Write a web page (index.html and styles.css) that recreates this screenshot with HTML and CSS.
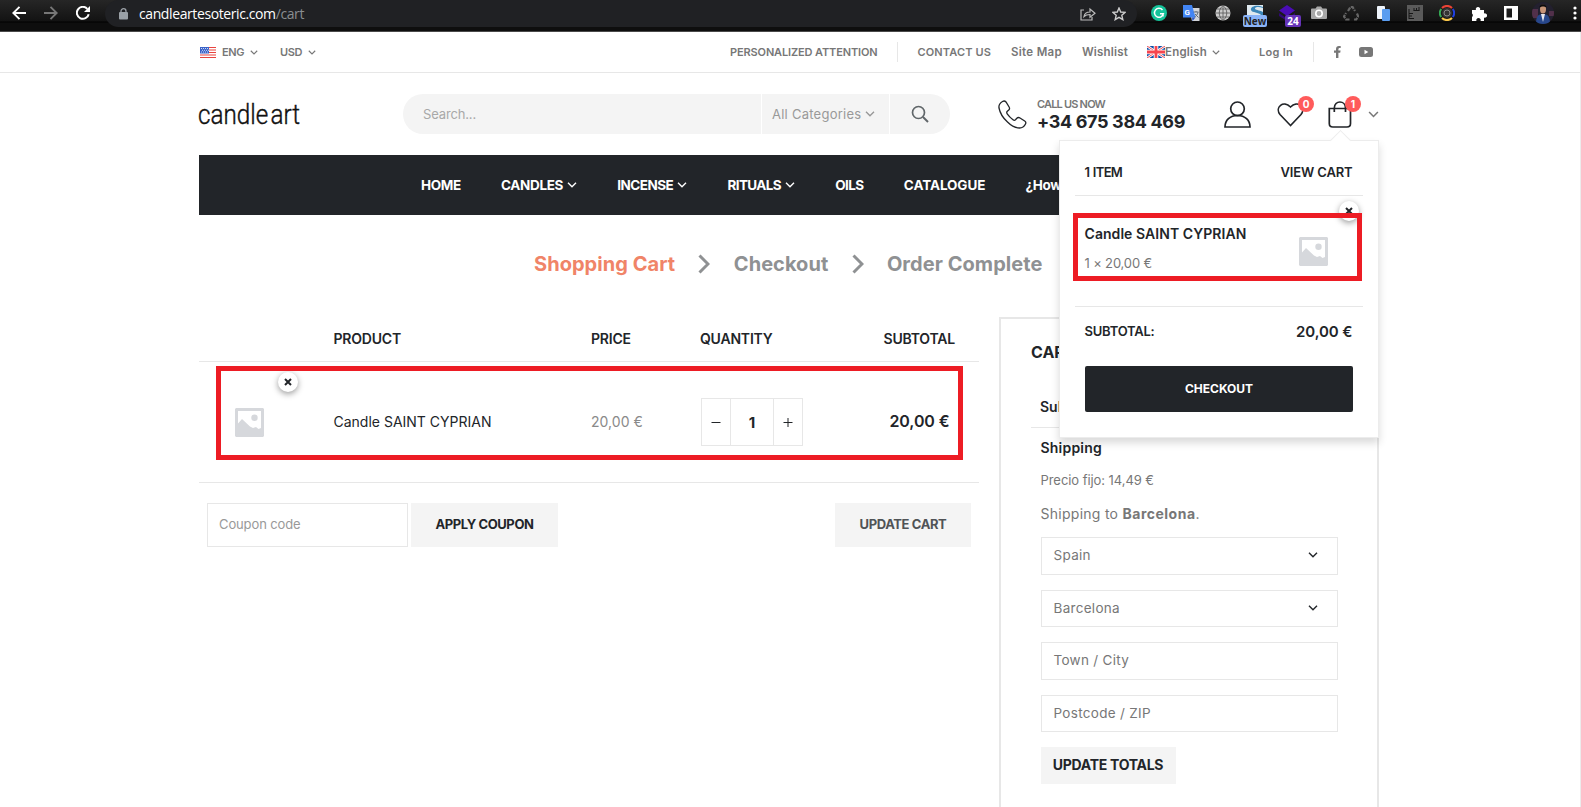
FILE: index.html
```html
<!DOCTYPE html>
<html lang="en">
<head>
    <meta charset="UTF-8">
    <meta name="viewport" content="width=device-width, initial-scale=1.0">
    <title>Cart - Candle Art</title>
    <link rel="stylesheet" href="styles.css">
</head>
<body>
    <!-- Shared icons -->
    <svg class="defs" width="0" height="0">
        <symbol id="chevron" viewBox="0 0 10 6"><path d="M1 .8l4 4 4-4" fill="none" stroke="currentColor" stroke-width="1.4"/></symbol>
        <symbol id="placeholder" viewBox="0 0 29 29">
            <path fill="#d6d8dc" fill-rule="evenodd" d="M1 0h27l1 1v27l-1 1H1l-1-1V1zM3 3v12.500l4-4.500 8 7.500 3 1.500 3-1 2.500 2 2.500-1V3z"/>
            <circle cx="19.500" cy="9.800" r="3.200" fill="#d6d8dc"/>
        </symbol>
        <symbol id="cross" viewBox="0 0 8 8"><path d="M1 1l6 6M7 1L1 7" stroke="#222529" stroke-width="2"/></symbol>
    </svg>

    <!-- Browser toolbar -->
    <div class="browser">
        <div class="browser-nav">
            <svg width="14" height="14" viewBox="0 0 14 14"><path d="M14 7H1.500M7.500 .8L1.300 7l6.200 6.200" fill="none" stroke="#fff" stroke-width="1.900"/></svg>
            <svg width="14" height="14" viewBox="0 0 14 14"><path d="M0 7h12.500M6.500 .8L12.700 7l-6.200 6.200" fill="none" stroke="#777" stroke-width="1.900"/></svg>
            <svg width="14" height="14" viewBox="0 0 14 14"><path d="M12.700 8.200A6 6 0 1 1 11.300 2.800" fill="none" stroke="#fff" stroke-width="2"/><path d="M14 0v6H8z" fill="#fff"/></svg>
        </div>
        <div class="address">
            <svg width="9" height="12" viewBox="0 0 9 12"><path d="M2 5V3.200a2.500 2.500 0 0 1 5 0V5" fill="none" stroke="#9aa0a6" stroke-width="1.300"/><rect y="4" width="9" height="7.500" rx="1" fill="#9aa0a6"/></svg>
            <span class="url">candleartesoteric.com<i>/cart</i></span>
            <svg class="share" width="16" height="14" viewBox="0 0 16 14"><path d="M4 3H1v10h11v-3M4 9.500c.5-3 2.500-4.500 6-4.500V2l5 4.300-5 4V7.500c-3 0-4.500.5-6 2z" fill="none" stroke="#bbb" stroke-width="1.200"/></svg>
            <svg width="14" height="14" viewBox="0 0 14 14"><path d="M7 1l1.700 4 4.300.4-3.200 2.900 1 4.300L7 10.300l-3.800 2.300 1-4.300L1 5.400 5.300 5z" fill="none" stroke="#ccc" stroke-width="1.400"/></svg>
        </div>
        <div class="extensions">
            <span><svg width="16" height="16" viewBox="0 0 16 16"><circle cx="8" cy="8" r="8" fill="#15c39a"/><path d="M11.500 5A4.500 4.500 0 1 0 12.400 8.700H9M12 8v3.500" fill="none" stroke="#fff" stroke-width="1.500"/></svg></span>
            <span><svg width="17" height="16" viewBox="0 0 17 16"><path d="M6 3h10.500v13H9z" fill="#d2d4d8"/><path d="M0 0h9l3.500 12.500H0z" fill="#4285f4"/><path d="M9 12.500h3.500L9.500 16z" fill="#2a56c6"/><text x="1.500" y="9.500" class="tiny-g">G</text><path d="M10.500 7h5M13 6v1M15 7c-.5 3-2 4-3.500 5M12 9l3.500 3.500" fill="none" stroke="#5f6b78"/></svg></span>
            <span><svg width="16" height="16" viewBox="0 0 16 16"><circle cx="8" cy="8" r="7.500" fill="#ccc"/><path d="M8 .5v15M.5 8h15M2 4h12M2 12h12M8 .5c-5 4-5 11 0 15M8 .5c5 4 5 11 0 15" fill="none" stroke="#555" stroke-width=".8"/></svg></span>
            <span><svg width="16" height="16" viewBox="0 0 16 16"><path d="M0 0h16v16H0z" fill="#dfe9ef"/><path d="M16 2C9-1 3 2 4 5s8 2 10 5l2 1V7C12 5 8 5 8 3.500S12 1.500 16 3z" fill="#3b86b8"/></svg><b class="ext-badge new">New</b></span>
            <span><svg width="16" height="16" viewBox="0 0 16 16"><path d="M8 0l8 5.500-8 5.500-8-5.500z" fill="#4a0cb5"/><path d="M0 8l8 5.500L16 8v3l-8 5-8-5z" fill="#2f0873"/></svg><b class="ext-badge count">24</b></span>
            <span><svg width="16" height="14" viewBox="0 0 16 14"><path d="M1 2.500h3.500L6 .5h4l1.500 2H15q1 0 1 1V12q0 1-1 1H1q-1 0-1-1V3.500q0-1 1-1z" fill="#a8a8a8"/><circle cx="8" cy="7.500" r="3.200" fill="none" stroke="#fff" stroke-width="1.600"/></svg></span>
            <span><svg width="16" height="15" viewBox="0 0 16 15"><path d="M5 5l2.500-4h2L12 5M14 7.500l1.200 3-2 3H10M6.500 13.500H3l-2-3 2-3.500" fill="none" stroke="#666" stroke-width="2.200" stroke-dasharray="4 1"/></svg></span>
            <span><svg width="13" height="15" viewBox="0 0 13 15"><rect width="8" height="13" rx="1" fill="#eef4fb"/><rect x="5" y="3" width="8" height="12" rx="1" fill="#5a9df0"/></svg></span>
            <span><svg width="16" height="16" viewBox="0 0 16 16"><path d="M0 0h16v16H0z" fill="#5a5a5a"/><path d="M2 14V4M2 13.500h5M2 11h3M2 8.500h4M7 5.500V3M9.500 5.500V3M12 5.500V2M6.500 5.500h6" fill="none" stroke="#161616"/></svg></span>
            <span><svg width="16" height="16" viewBox="0 0 16 16"><g fill="none" stroke-width="2"><path d="M3 3a7 7 0 0 1 10 0" stroke="#ea4335"/><path d="M13.800 4a7 7 0 0 1 0 8" stroke="#2040e0"/><path d="M13 13a7 7 0 0 1-10 0" stroke="#fbc84a"/><path d="M2.200 12a7 7 0 0 1 0-8" stroke="#34a853"/></g><circle cx="8" cy="8" r="5" fill="#333"/><circle cx="8" cy="8" r="3" fill="none" stroke="#888"/></svg></span>
            <span><svg width="15" height="15" viewBox="0 0 15 15"><path d="M0 4h4a2.200 2.200 0 1 1 4 0h4v3.500a2.200 2.200 0 1 1 0 4V15H8.500a2.200 2.200 0 1 0-4 0H0v-4a2.200 2.200 0 0 0 0-3.500z" fill="#fff"/></svg></span>
            <span><svg width="14" height="14" viewBox="0 0 14 14"><path d="M0 0h14v14H0zM2.500 2.500v9H8v-9z" fill="#fff" fill-rule="evenodd"/></svg></span>
            <span><svg width="22" height="22" viewBox="0 0 22 22"><clipPath id="face"><circle cx="11" cy="11" r="11"/></clipPath><g clip-path="url(#face)"><path d="M0 0h22v22H0z" fill="#23202f"/><path d="M0 7h6v9H0zM17 9h5v5h-5z" fill="#51304a"/><path d="M4 22c0-6 1-10 7-10s7 4 7 10z" fill="#27478c"/><path d="M9 12h4l-2 8z" fill="#e8e8f0"/><ellipse cx="11" cy="7" rx="3" ry="4.500" fill="#c79478"/><path d="M7.500 6c-.5-5 7.500-5 7 0-1-2-6-2-7 0z" fill="#0c0a0c"/></g></svg></span>
            <span><svg width="4" height="14" viewBox="0 0 4 14"><g fill="#fff"><circle cx="2" cy="2" r="1.600"/><circle cx="2" cy="7" r="1.600"/><circle cx="2" cy="12" r="1.600"/></g></svg></span>
        </div>
    </div>

    <div class="page">
        <div class="top-bar">
            <div class="container">
                <svg class="flag-us" width="16" height="11" viewBox="0 0 16 11"><path d="M0 0h16v11H0z" fill="#fff"/><path d="M0 .5h16M0 3h16M0 5.500h16M0 8h16M0 10.500h16" stroke="#e8443f" stroke-width="1.200"/><path d="M0 0h9v6.500H0z" fill="#3a63c8"/><path d="M1 1.500h7.500M2 3.300h7M1 5h7.500" stroke="#dfe7fa" stroke-width=".9" stroke-dasharray="1 1"/></svg>
                <span class="caps">ENG</span>
                <svg class="chev" width="8" height="5"><use href="#chevron"/></svg>
                <span class="caps usd">USD</span>
                <svg class="chev" width="8" height="5"><use href="#chevron"/></svg>
                <div class="top-links">
                    <a class="attention">PERSONALIZED ATTENTION</a>
                    <i class="sep"></i>
                    <a class="contact">CONTACT US</a>
                    <a class="sitemap">Site Map</a>
                    <a class="wishlist">Wishlist</a>
                    <svg width="18" height="12" viewBox="0 0 18 12"><path d="M0 0h18v12H0z" fill="#0d4ea8"/><path d="M0 0l18 12M18 0L0 12" stroke="#fff" stroke-width="2.600"/><path d="M0 0l18 12M18 0L0 12" stroke="#f04c55" stroke-width="1"/><path d="M9 0v12M0 6h18" stroke="#fff" stroke-width="4.600"/><path d="M9 0v12M0 6h18" stroke="#f5454f" stroke-width="2.800"/></svg>
                    <a class="english">English</a>
                    <svg class="chev" width="8" height="5"><use href="#chevron"/></svg>
                    <a class="login">Log In</a>
                    <i class="sep"></i>
                    <svg class="fb" width="7" height="12" viewBox="0 0 7 12"><path d="M2 12V6.800H0V4.600h2V3C2 1 3.100 0 4.900 0 5.800 0 6.700.1 6.700.1v2h-1C4.700 2.100 4.400 2.700 4.400 3.300v1.300h2.200l-.4 2.200H4.400V12z" fill="#777"/></svg>
                    <svg width="14" height="10" viewBox="0 0 14 10"><rect width="14" height="10" rx="2.500" fill="#777"/><path d="M5.500 2.800v4.400L9.300 5z" fill="#fff"/></svg>
                </div>
            </div>
        </div>

        <div class="header">
            <svg class="logo" width="104" height="36" viewBox="0 0 104 36"><text x="0" y="28" textLength="102" lengthAdjust="spacingAndGlyphs">candle art</text></svg>
            <div class="search">
                <span class="search-input">Search...</span>
                <span class="search-cat">All Categories <svg width="10" height="6"><use href="#chevron"/></svg></span>
                <span class="search-btn"><svg width="18" height="18" viewBox="0 0 18 18"><circle cx="7.500" cy="7.500" r="6" fill="none" stroke="#606669" stroke-width="1.700"/><path d="M12 12l5 5" stroke="#606669" stroke-width="2"/></svg></span>
            </div>
            <svg class="phone" width="29" height="29" viewBox="0 0 29 29"><path d="M4.500 1.500C2 3 .5 5 1 8c1 5 4 10 8.500 14 4 4 8 6 12 6 3 0 5-2 6-4 .6-1.200.3-2.300-.8-3L22 18c-1.300-.8-2.300-.6-3.200.3l-1.300 1.500c-.8.8-1.600.7-2.500 0-2-1.600-4.200-3.800-5.800-6-.7-1-.6-1.800.1-2.500l1.500-1.300c.9-.8 1-1.800.3-3L8 2C7 .8 5.800.7 4.500 1.500z" fill="none" stroke="#222529" stroke-width="1.300"/></svg>
            <div class="call">
                <span>CALL US NOW</span>
                <b>+34 675 384 469</b>
            </div>
            <svg class="user" width="27" height="27" viewBox="0 0 27 27"><g fill="none" stroke="#222529" stroke-width="1.700"><circle cx="13.500" cy="7.800" r="6.800"/><path d="M1 26c0-7 5-11.500 12.500-11.500S26 19 26 26z"/></g></svg>
            <div class="icon-wrap heart">
                <svg width="27" height="25" viewBox="0 0 27 25"><path d="M13.500 23.500L3 12.500C-2.500 5 6.500-2 13.500 5 20.500-2 29.500 5 24 12.500z" fill="none" stroke="#222529" stroke-width="1.600"/></svg>
                <b class="badge">0</b>
            </div>
            <div class="icon-wrap bag">
                <svg width="24" height="27" viewBox="0 0 24 27"><path d="M1.300 7.500h21.200v15q0 3.500-3.500 3.500H4.800q-3.500 0-3.500-3.500zM6.300 11V7c0-8 11.200-8 11.200 0v4" fill="none" stroke="#222529" stroke-width="1.700"/></svg>
                <b class="badge">1</b>
            </div>
            <svg class="chev-bag" width="11" height="7"><use href="#chevron"/></svg>
        </div>

        <div class="menu">
            <a class="m-home">HOME</a>
            <a class="m-candles">CANDLES <svg width="10" height="6"><use href="#chevron"/></svg></a>
            <a class="m-incense">INCENSE <svg width="10" height="6"><use href="#chevron"/></svg></a>
            <a class="m-rituals">RITUALS <svg width="10" height="6"><use href="#chevron"/></svg></a>
            <a class="m-oils">OILS</a>
            <a class="m-catalogue">CATALOGUE</a>
            <a class="m-how">¿How does it work?</a>
        </div>

        <div class="steps">
            <b class="active">Shopping Cart</b>
            <svg width="12" height="20" viewBox="0 0 12 20"><path d="M1.500 1.500L10 10l-8.500 8.500" fill="none" stroke="#8f9193" stroke-width="3"/></svg>
            <b>Checkout</b>
            <svg width="12" height="20" viewBox="0 0 12 20"><path d="M1.500 1.500L10 10l-8.500 8.500" fill="none" stroke="#8f9193" stroke-width="3"/></svg>
            <b>Order Complete</b>
        </div>

        <div class="main">
            <div class="cart">
                <div class="row head">
                    <span></span><span>PRODUCT</span><span>PRICE</span><span>QUANTITY</span><span class="right">SUBTOTAL</span>
                </div>
                <div class="row item">
                    <span class="thumb"><svg width="29" height="29"><use href="#placeholder"/></svg></span>
                    <span class="name">Candle SAINT CYPRIAN</span>
                    <span class="price">20,00 €</span>
                    <span class="qty">
                        <i><svg width="10" height="10" viewBox="0 0 10 10"><path d="M.5 5.500h9" stroke="#222529"/></svg></i>
                        <b>1</b>
                        <i><svg width="10" height="10" viewBox="0 0 10 10"><path d="M.5 5.500h9M5 1v9" stroke="#222529"/></svg></i>
                    </span>
                    <span class="total">20,00 €</span>
                    <div class="remove"><svg width="8" height="8"><use href="#cross"/></svg></div>
                    <div class="mark"></div>
                </div>
                <div class="actions">
                    <span class="coupon">Coupon code</span>
                    <span class="btn apply">APPLY COUPON</span>
                    <span class="btn update">UPDATE CART</span>
                </div>
            </div>

            <div class="totals">
                <h3>CART TOTALS</h3>
                <div class="line">Subtotal</div>
                <div class="ship">
                    <b>Shipping</b>
                    <p class="fixed">Precio fijo: 14,49 €</p>
                    <p class="dest">Shipping to <strong>Barcelona</strong>.</p>
                    <div class="field tall">Spain <svg width="10" height="6"><use href="#chevron"/></svg></div>
                    <div class="field">Barcelona <svg width="10" height="6"><use href="#chevron"/></svg></div>
                    <div class="field tall">Town / City</div>
                    <div class="field">Postcode / ZIP</div>
                    <span class="update-totals">UPDATE TOTALS</span>
                </div>
            </div>
        </div>

        <!-- Mini cart dropdown -->
        <div class="popup">
            <div class="popup-head"><span class="count-text">1 ITEM</span><span>VIEW CART</span></div>
            <div class="popup-item">
                <div>
                    <b>Candle SAINT CYPRIAN</b>
                    <span>1 × 20,00 €</span>
                </div>
                <svg width="29" height="29"><use href="#placeholder"/></svg>
                <div class="remove"><svg width="8" height="8"><use href="#cross"/></svg></div>
                <div class="mark"></div>
            </div>
            <div class="popup-total"><span>SUBTOTAL:</span><b>20,00 €</b></div>
            <div class="popup-btn">CHECKOUT</div>
        </div>
    </div>
</body>
</html>
```
FILE: styles.css
```css
* {
    box-sizing: border-box;
}
body {
    margin: 0;
    height: 807px;
    overflow: hidden;
    font-family: Inter, sans-serif;
    font-size: 13px;
    color: #777;
    background: #fff;
}
svg {
    display: block;
    flex: none;
}
i {
    font-style: normal;
}
.defs {
    position: absolute;
}

/* browser toolbar */
.browser {
    display: flex;
    height: 32px;
    overflow: hidden;
    background: linear-gradient(#262626, #131313 21px, #000 22px, #0e0e0e 23px, #0e0e0e 31px, #4a4a4a 31px);
}
.browser-nav {
    display: flex;
    flex: none;
    gap: 18px;
    width: 105px;
    padding: 6px 0 0 12px;
}
.address {
    display: flex;
    flex: none;
    align-items: center;
    width: 1032px;
    height: 27px;
    padding: 0 11px 0 14px;
    border-radius: 14px;
    background: #202124;
}
.url {
    margin-left: 11px;
    font: 14px "Open Sans", sans-serif;
    letter-spacing: -0.4px;
    color: #fff;
}
.url i {
    color: #8a8d91;
}
.share {
    margin: 0 16px 0 auto;
}
.extensions {
    display: flex;
    flex: none;
    padding-left: 6px;
}
.extensions span {
    position: relative;
    display: flex;
    align-items: center;
    justify-content: center;
    width: 32px;
    height: 26px;
    flex: none;
}
.tiny-g {
    font: bold 8px Roboto, sans-serif;
    fill: #fff;
}
.ext-badge {
    position: absolute;
    top: 15px;
    height: 12px;
    border-radius: 2px;
    font: bold 10px/12px "Open Sans", sans-serif;
    text-align: center;
}
.new {
    left: 4px;
    width: 24px;
    color: #222;
    background: #8ab4f8;
}
.count {
    left: 14px;
    width: 16px;
    color: #fff;
    background: #6533b8;
}

/* header */
.page {
    position: relative;
    height: 775px;
    border-right: 1px solid #ececec;
}
.top-bar {
    height: 41px;
    border-bottom: 1px solid #e7e7e7;
    font-size: 11px;
    font-weight: 600;
}
.container {
    display: flex;
    align-items: center;
    height: 40px;
    padding: 0 207px 0 200px;
}
.flag-us {
    margin-right: 6px;
}
.caps {
    letter-spacing: -0.4px;
}
.chev {
    margin-left: 6px;
}
.usd {
    margin-left: 22px;
}
.top-links {
    display: flex;
    align-items: center;
    margin-left: auto;
}
.sep {
    width: 1px;
    height: 20px;
    background: #e7e7e7;
}
.attention {
    margin-right: 19px;
    letter-spacing: -0.13px;
}
.contact {
    margin-left: 20px;
    letter-spacing: 0.13px;
}
.sitemap {
    margin-left: 20px;
    font-size: 11.5px;
    letter-spacing: 0.3px;
}
.wishlist {
    margin: 0 19px 0 20px;
    font-size: 11.5px;
    letter-spacing: 0.2px;
}
.english {
    font-size: 11.5px;
    letter-spacing: 0.2px;
}
.top-links .chev {
    margin-left: 5px;
}
.login {
    margin: 0 20px 0 39px;
    letter-spacing: 0.27px;
}
.fb {
    margin: 0 18px 0 20px;
}
.header {
    display: flex;
    align-items: center;
    height: 82px;
    padding-left: 198px;
}
.logo text {
    font: 300 27px Roboto, sans-serif;
    word-spacing: -4px;
    fill: #111;
    stroke: #111;
    stroke-width: 0.4px;
}
.search {
    display: flex;
    width: 547px;
    height: 40px;
    margin-left: 101px;
    border-radius: 20px;
    overflow: hidden;
    background: #fff;
}
.search span {
    display: flex;
    align-items: center;
    padding-bottom: 1px;
    background: #f4f4f4;
}
.search .search-input {
    width: 358px;
    padding-left: 20px;
    color: #a8a8a8;
    letter-spacing: -0.15px;
}
.search .search-cat {
    gap: 4px;
    width: 127px;
    margin: 0 1px;
    padding-left: 10px;
    color: #999;
    letter-spacing: 0.25px;
}
.search .search-btn {
    width: 60px;
    padding-left: 21px;
}
.phone {
    margin: 1px 0 0 48px;
}
.call {
    display: flex;
    flex-direction: column;
    width: 149px;
    margin: 3px 0 0 10px;
    white-space: nowrap;
}
.call span {
    font-size: 11px;
    font-weight: 600;
    line-height: 13px;
    letter-spacing: -0.81px;
}
.call b {
    font-size: 18px;
    line-height: 22px;
    letter-spacing: -0.35px;
    color: #222529;
}
.user {
    margin-left: 38px;
}
.icon-wrap {
    position: relative;
}
.heart {
    margin-left: 26px;
}
.bag {
    margin-left: 24px;
}
.badge {
    position: absolute;
    top: -6px;
    left: 21px;
    width: 16px;
    height: 16px;
    border-radius: 50%;
    font-size: 10px;
    line-height: 16px;
    text-align: center;
    color: #fff;
    background: #ff5b5b;
}
.bag .badge {
    left: 17px;
    top: -5px;
}
.chev-bag {
    margin-left: 16px;
}

/* main menu */
.menu {
    display: flex;
    align-items: center;
    gap: 40.2px;
    width: 1180px;
    height: 60px;
    margin-left: 199px;
    padding-left: 222px;
    font-size: 13.5px;
    font-weight: 700;
    color: #fff;
    background: #222529;
    overflow: hidden;
    white-space: nowrap;
}
.menu a {
    display: flex;
    align-items: center;
    gap: 4px;
    flex: none;
}
.m-home, .m-candles {
    letter-spacing: -0.34px;
}
.m-incense {
    letter-spacing: -0.52px;
}
.m-rituals {
    letter-spacing: -0.62px;
}
.m-oils {
    letter-spacing: -0.54px;
}
.m-catalogue {
    letter-spacing: -0.09px;
}
.m-how {
    letter-spacing: -0.3px;
}

/* checkout steps */
.steps {
    display: flex;
    align-items: center;
    height: 102px;
    padding: 0 0 4px 534px;
    gap: 23.3px;
    font-size: 20px;
    letter-spacing: 0.05px;
    color: #8f9193;
}
.steps .active {
    color: #f08468;
}

/* cart */
.main {
    display: flex;
    gap: 20px;
    padding-left: 199px;
}
.cart {
    width: 780px;
}
.row {
    position: relative;
    display: grid;
    grid-template-columns: 134.5px 257.5px 109px 100px 1fr;
    align-items: center;
    border-bottom: 1px solid #e7e7e7;
    font-size: 14px;
}
.head {
    height: 45px;
    padding-bottom: 1px;
    font-weight: 600;
    letter-spacing: -0.2px;
    color: #222529;
}
.right {
    padding-right: 24px;
    text-align: right;
}
.item {
    height: 121px;
}
.thumb {
    padding-left: 36px;
}
.name {
    padding-bottom: 2px;
    color: #222529;
}
.price {
    padding-bottom: 2px;
    letter-spacing: 0.05px;
    color: #8a8a8a;
}
.qty {
    display: flex;
    width: 102px;
    height: 48px;
    margin-left: 1px;
    border: 1px solid #e7e7e7;
    color: #222529;
}
.qty i, .qty b {
    display: flex;
    align-items: center;
    justify-content: center;
    width: 28px;
}
.qty b {
    width: 44px;
    border: solid #e7e7e7;
    border-width: 0 1px;
    font-size: 15px;
}
.total {
    padding: 0 29.5px 2px 0;
    text-align: right;
    font-size: 16px;
    font-weight: 600;
    letter-spacing: -0.1px;
    color: #222529;
}
.remove {
    position: absolute;
    top: 10px;
    left: 79px;
    display: flex;
    align-items: center;
    justify-content: center;
    width: 20px;
    height: 20px;
    border-radius: 50%;
    background: #fff;
    box-shadow: 0 2px 6px rgba(0, 0, 0, 0.4);
}
.mark {
    position: absolute;
    top: 4px;
    left: 17px;
    width: 747px;
    height: 94px;
    border: 5px solid #ed1c24;
}
.actions {
    display: flex;
    padding: 20px 8px;
}
.coupon {
    width: 201px;
    height: 44px;
    padding-left: 11px;
    border: 1px solid #e7e7e7;
    line-height: 41px;
    letter-spacing: -0.12px;
    color: #999;
}
.btn {
    height: 44px;
    line-height: 42px;
    font-weight: 700;
    letter-spacing: -0.4px;
    text-align: center;
    background: #f4f4f4;
}
.apply {
    width: 147px;
    margin-left: 3px;
    color: #222529;
}
.update {
    width: 136px;
    margin-left: auto;
    color: #505356;
}

/* totals box */
.totals {
    width: 380px;
    height: 490px;
    padding: 0 30px;
    border: 2px solid #e7e7e7;
    border-bottom: 0;
}
.totals h3 {
    margin: 21px 0 0;
    font-size: 16px;
    line-height: 24px;
    font-weight: 700;
    color: #222529;
}
.line {
    height: 64px;
    padding: 32px 9px 0;
    border-bottom: 1px solid #e7e7e7;
    font-size: 14px;
    line-height: 21px;
    font-weight: 600;
    color: #222529;
}
.ship {
    padding: 10px 9.5px;
}
.ship b {
    display: block;
    font-size: 14px;
    line-height: 20px;
    font-weight: 600;
    letter-spacing: 0.21px;
    color: #222529;
}
.fixed, .dest {
    margin: 12px 0 0;
    line-height: 20px;
}
.fixed {
    letter-spacing: -0.06px;
}
.dest {
    margin: 14px 0 13px;
    font-size: 14px;
    letter-spacing: 0.27px;
}
.dest strong {
    letter-spacing: 0.5px;
}
.field {
    display: flex;
    align-items: center;
    justify-content: space-between;
    width: 297px;
    height: 37px;
    margin-bottom: 15px;
    padding: 0 19px 2px 12px;
    border: 1px solid #e7e7e7;
    font-size: 13.5px;
    letter-spacing: 0.3px;
}
.tall {
    height: 38px;
}
.field svg {
    color: #222529;
}
.update-totals {
    display: block;
    width: 135px;
    height: 37px;
    font-size: 14px;
    line-height: 36px;
    font-weight: 700;
    letter-spacing: -0.28px;
    text-align: center;
    color: #222529;
    background: #f4f4f4;
}

/* mini cart */
.popup {
    position: absolute;
    top: 108px;
    left: 1059px;
    width: 320px;
    height: 298px;
    padding: 0 15px;
    border: 1px solid #ececec;
    background: #fff;
    box-shadow: 0 5px 8px rgba(0, 0, 0, 0.15);
    color: #222529;
}
.popup::before {
    content: "";
    position: absolute;
    top: -8px;
    left: 273px;
    width: 14px;
    height: 14px;
    border: solid #ececec;
    border-width: 1px 0 0 1px;
    background: #fff;
    transform: rotate(45deg);
}
.popup-head {
    position: relative;
    display: flex;
    justify-content: space-between;
    height: 55px;
    padding: 20px 10.5px 0 9.5px;
    border-bottom: 1px solid #e7e7e7;
    font-weight: 600;
    line-height: 22px;
    letter-spacing: -0.14px;
}
.count-text {
    letter-spacing: -0.7px;
    word-spacing: 1px;
}
.popup-item {
    position: relative;
    display: flex;
    justify-content: space-between;
    height: 111px;
    padding: 27px 35px 0 9.5px;
    border-bottom: 1px solid #e7e7e7;
}
.popup-item b {
    display: block;
    font-size: 14px;
    line-height: 22px;
    font-weight: 600;
    letter-spacing: 0.06px;
}
.popup-item span {
    display: block;
    margin-top: 8px;
    line-height: 20px;
    letter-spacing: -0.15px;
    color: #777;
}
.popup-item > svg {
    margin-top: 14px;
}
.popup-item .remove {
    top: 5px;
    left: 264px;
}
.popup-item .mark {
    top: 17px;
    left: -2px;
    width: 289px;
    height: 68px;
}
.popup-total {
    display: flex;
    justify-content: space-between;
    padding: 13px 10.5px 0 9.5px;
    font-weight: 600;
    line-height: 22px;
    letter-spacing: -0.22px;
}
.popup-total b {
    padding-top: 1px;
    font-size: 15px;
    font-weight: 600;
    letter-spacing: -0.06px;
}
.popup-btn {
    height: 46px;
    margin: 23px 10px 0;
    border-radius: 2px;
    line-height: 46px;
    font-size: 12px;
    font-weight: 700;
    text-align: center;
    color: #fff;
    background: #222529;
}
```
